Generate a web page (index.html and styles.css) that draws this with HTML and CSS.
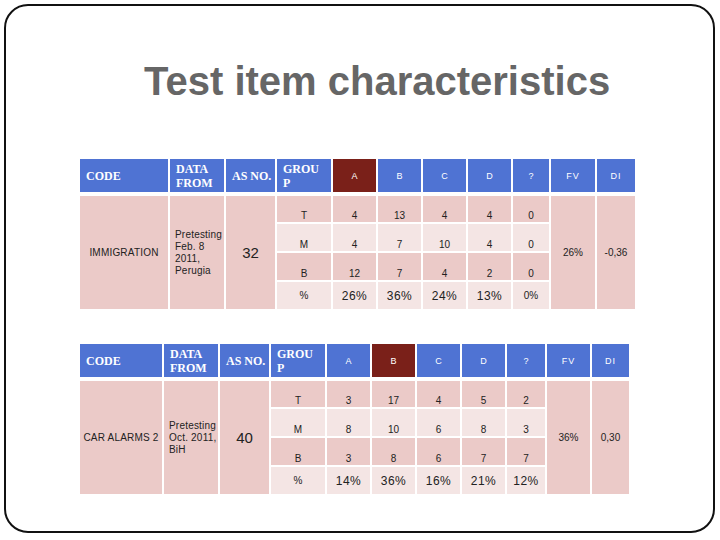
FILE: index.html
```html
<!DOCTYPE html>
<html>
<head>
<meta charset="utf-8">
<link rel="stylesheet" href="styles.css">
</head>
<body>
<div class="slide">
  <h1 class="title">Test item characteristics</h1>

  <div class="tbl t1">
    <div class="hd serif">CODE</div>
    <div class="hd serif">DATA<br>FROM</div>
    <div class="hd serif">AS NO.</div>
    <div class="hd serif">GROU<br>P</div>
    <div class="hd sm sel">A</div>
    <div class="hd sm">B</div>
    <div class="hd sm">C</div>
    <div class="hd sm">D</div>
    <div class="hd sm">?</div>
    <div class="hd sm sp">FV</div>
    <div class="hd sm sp">DI</div>

    <div class="span code">IMMIGRATION</div>
    <div class="span data">Pretesting<br>Feb. 8<br>2011,<br>Perugia</div>
    <div class="span asno">32</div>
    <div class="c dk">T</div>
    <div class="c dk">4</div>
    <div class="c dk">13</div>
    <div class="c dk">4</div>
    <div class="c dk">4</div>
    <div class="c dk">0</div>
    <div class="span mid">26%</div>
    <div class="span mid">-0,36</div>

    <div class="c lt">M</div>
    <div class="c lt">4</div>
    <div class="c lt">7</div>
    <div class="c lt">10</div>
    <div class="c lt">4</div>
    <div class="c lt">0</div>

    <div class="c dk">B</div>
    <div class="c dk">12</div>
    <div class="c dk">7</div>
    <div class="c dk">4</div>
    <div class="c dk">2</div>
    <div class="c dk">0</div>

    <div class="c lt pc">%</div>
    <div class="c lt pc big">26%</div>
    <div class="c lt pc big">36%</div>
    <div class="c lt pc big">24%</div>
    <div class="c lt pc big">13%</div>
    <div class="c lt pc">0%</div>
  </div>

  <div class="tbl t2">
    <div class="hd serif">CODE</div>
    <div class="hd serif">DATA<br>FROM</div>
    <div class="hd serif">AS NO.</div>
    <div class="hd serif">GROU<br>P</div>
    <div class="hd sm">A</div>
    <div class="hd sm sel">B</div>
    <div class="hd sm">C</div>
    <div class="hd sm">D</div>
    <div class="hd sm">?</div>
    <div class="hd sm sp">FV</div>
    <div class="hd sm sp">DI</div>

    <div class="span code">CAR ALARMS 2</div>
    <div class="span data">Pretesting<br>Oct. 2011,<br>BiH</div>
    <div class="span asno">40</div>
    <div class="c dk">T</div>
    <div class="c dk">3</div>
    <div class="c dk">17</div>
    <div class="c dk">4</div>
    <div class="c dk">5</div>
    <div class="c dk">2</div>
    <div class="span mid">36%</div>
    <div class="span mid">0,30</div>

    <div class="c lt">M</div>
    <div class="c lt">8</div>
    <div class="c lt">10</div>
    <div class="c lt">6</div>
    <div class="c lt">8</div>
    <div class="c lt">3</div>

    <div class="c dk">B</div>
    <div class="c dk">3</div>
    <div class="c dk">8</div>
    <div class="c dk">6</div>
    <div class="c dk">7</div>
    <div class="c dk">7</div>

    <div class="c lt pc">%</div>
    <div class="c lt pc big">14%</div>
    <div class="c lt pc big">36%</div>
    <div class="c lt pc big">16%</div>
    <div class="c lt pc big">21%</div>
    <div class="c lt pc big">12%</div>
  </div>
</div>
</body>
</html>
```
FILE: styles.css
```css
html, body {
  margin: 0;
  padding: 0;
  background: #ffffff;
}
body {
  font-family: "Liberation Sans", Arial, sans-serif;
}
.slide {
  margin: 4px 0 0 4px;
  width: 707px;
  height: 525px;
  border: 2px solid #111111;
  border-radius: 24px;
  overflow: hidden;
}
.title {
  margin: 51px 0 0 0;
  padding-left: 138px;
  font-family: "Liberation Sans", Arial, sans-serif;
  font-weight: bold;
  font-size: 40px;
  line-height: 48px;
  color: #666666;
}
.tbl {
  display: grid;
  gap: 2px;
  grid-template-rows: 35px 26px 27px 27px 27px;
  margin-left: 74px;
}
.t1 {
  margin-top: 54px;
  grid-template-columns: 88px 54px 49px 54px 43px 43px 43px 43px 36px 44px 38px;
}
.t2 {
  margin-top: 35px;
  grid-template-columns: 82px 54px 49px 54px 43px 43px 43px 43px 38px 43px 37px;
}
.hd {
  height: 33px;
  background: #4f73d3;
  color: #ffffff;
  display: flex;
  align-items: center;
  justify-content: center;
}
.hd.serif {
  justify-content: flex-start;
  padding-left: 6px;
  font-family: "Liberation Serif", "Times New Roman", serif;
  font-weight: bold;
  font-size: 12px;
  line-height: 14px;
}
.hd.sm {
  font-size: 9px;
}
.hd.sp {
  letter-spacing: 1px;
}
.hd.sel {
  background: #7a2019;
}
.span {
  grid-row: span 4;
  background: #ebcac8;
  color: #222222;
  font-size: 10px;
  line-height: 12px;
  display: flex;
  align-items: center;
  justify-content: center;
}
.code {
  letter-spacing: 0.2px;
}
.data {
  justify-content: flex-start;
  padding-left: 5px;
  letter-spacing: 0.2px;
}
.asno {
  font-size: 15px;
}
.c {
  display: flex;
  align-items: flex-end;
  justify-content: center;
  font-size: 10px;
  line-height: 12px;
  color: #222222;
}
.dk {
  background: #ebcac8;
}
.lt {
  background: #f4e5e4;
}
.pc {
  align-items: center;
}
.big {
  font-size: 12px;
  letter-spacing: 0.5px;
}
```
